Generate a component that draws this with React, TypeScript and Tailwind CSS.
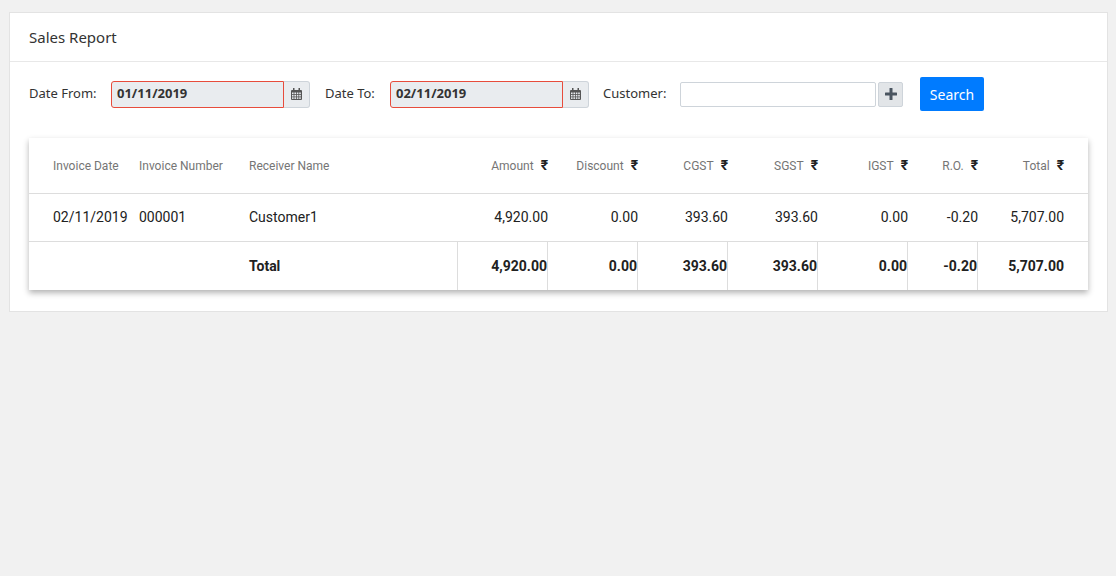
import React from "react";

const cols = "grid grid-cols-[102px_110px_217px_90px_90px_90px_90px_90px_70px_110px]";
const R = () => <span className="ml-[7px] font-bold text-[14px] text-[#222] [font-family:'DejaVu_Sans',sans-serif]">₹</span>;

function Cal() {
  return (
    <svg width="11" height="12" viewBox="0 0 11 12" fill="#555">
      <rect x="0" y="2" width="11" height="10" rx="1" />
      <rect x="2" y="0" width="1.5" height="3" />
      <rect x="7.5" y="0" width="1.5" height="3" />
      <g fill="#e9ecef">
        {[0, 1, 2].map((r) =>
          [0, 1, 2, 3].map((c) => (
            <rect key={r + "-" + c} x={1 + c * 2.4} y={4.5 + r * 2.4} width="1.6" height="1.6" />
          ))
        )}
      </g>
    </svg>
  );
}

function DateInput({ v }: { v: string }) {
  return (
    <div className="flex h-[27px]">
      <div className="w-[173px] border border-[#e74c3c] rounded-l-[3px] bg-[#e9ecef] flex items-center pl-[5px] text-[13px] font-bold text-[#333] [font-family:'DejaVu_Sans_Condensed','DejaVu_Sans',sans-serif]">
        {v}
      </div>
      <div className="w-[26px] border border-l-0 border-[#ced4da] rounded-r-[3px] bg-[#e9ecef] flex items-center justify-center">
        <Cal />
      </div>
    </div>
  );
}

export default function App() {
  const head = ["Invoice Date", "Invoice Number", "Receiver Name"];
  const nums = ["Amount", "Discount", "CGST", "SGST", "IGST", "R.O.", "Total"];
  const row = ["4,920.00", "0.00", "393.60", "393.60", "0.00", "-0.20", "5,707.00"];
  return (
    <div className="min-h-[576px] bg-[#f1f1f1] pt-[12px] px-[9px] [font-family:'Open_Sans',sans-serif]">
      <div className="bg-white border border-[#e3e3e3] w-[1099px] h-[300px]">
        <div className="h-[49px] border-b border-[#e8e8e8] flex items-center pl-[19px] text-[15px] text-[#333]">
          Sales Report
        </div>
        <div className="flex items-center h-[64px] pl-[19px] text-[13px] text-[#333]">
          <span className="w-[82px]">Date From:</span>
          <DateInput v="01/11/2019" />
          <span className="ml-[15px] w-[65px]">Date To:</span>
          <DateInput v="02/11/2019" />
          <span className="ml-[14px] w-[77px]">Customer:</span>
          <div className="w-[196px] h-[25px] border border-[#ced4da] rounded-[2px]" />
          <div className="ml-[2px] w-[25px] h-[25px] border border-[#ced4da] rounded-[2px] bg-[#e2e5e8] flex items-center justify-center">
            <svg width="12" height="12" viewBox="0 0 12 12" fill="#4a5560">
              <rect x="4.5" y="0" width="3" height="12" rx="0.5" />
              <rect x="0" y="4.5" width="12" height="3" rx="0.5" />
            </svg>
          </div>
          <div className="ml-[17px] w-[64px] h-[34px] bg-[#007bff] rounded-[2px] text-white flex items-center justify-center text-[14px]">
            Search
          </div>
        </div>
        <div className="ml-[19px] mt-[12px] w-[1059px] bg-white shadow-[0_3px_6px_rgba(0,0,0,0.3)] [font-family:Roboto,sans-serif]">
          <div className={cols + " h-[56px] items-center text-[12px] text-[#757575] border-b border-[#ddd]"}>
            <div className="pl-[24px]">{head[0]}</div>
            <div className="pl-[8px]">{head[1]}</div>
            <div className="pl-[8px]">{head[2]}</div>
            {nums.map((n, i) => (
              <div key={n} className={"text-right " + (i === 6 ? "pr-[24px]" : "")}>
                {n}
                <R />
              </div>
            ))}
          </div>
          <div className={cols + " h-[48px] items-center text-[14px] text-[#212121] border-b border-[#ddd]"}>
            <div className="pl-[24px]">02/11/2019</div>
            <div className="pl-[8px]">000001</div>
            <div className="pl-[8px]">Customer1</div>
            {row.map((n, i) => (
              <div key={i} className={"text-right " + (i === 6 ? "pr-[24px]" : "")}>
                {n}
              </div>
            ))}
          </div>
          <div className={cols + " h-[48px] text-[14px] font-bold text-[#212121]"}>
            <div />
            <div />
            <div className="pl-[8px] flex items-center border-r border-[#ddd]">Total</div>
            {row.map((n, i) => (
              <div
                key={i}
                className={"flex items-center justify-end " + (i === 6 ? "pr-[24px]" : "border-r border-[#ddd]")}
              >
                {n}
              </div>
            ))}
          </div>
        </div>
      </div>
    </div>
  );
}
